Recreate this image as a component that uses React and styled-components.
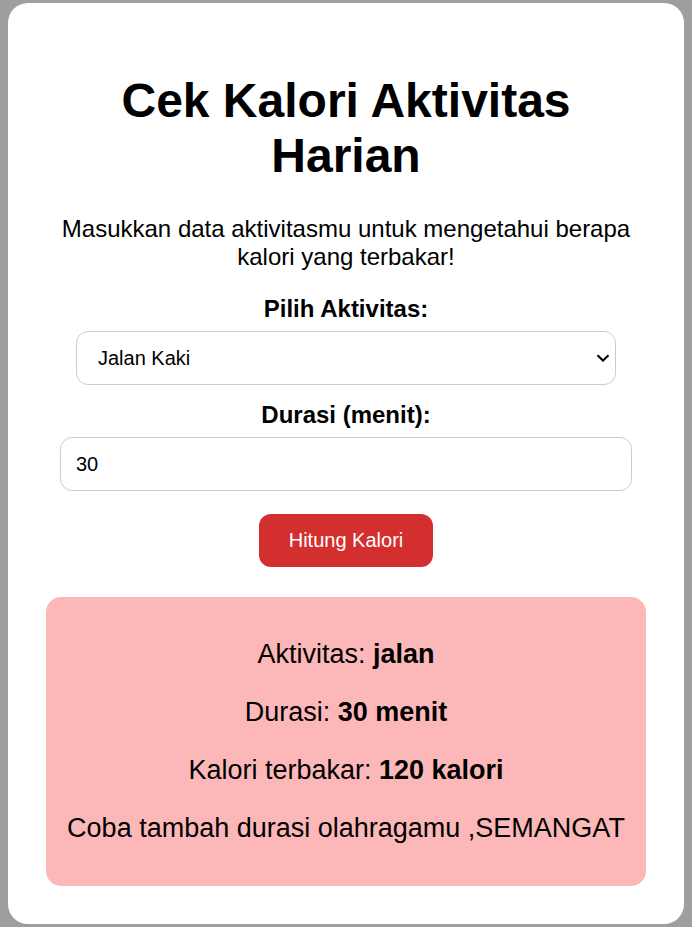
import React, { useState } from "react";
import styled, { createGlobalStyle } from "styled-components";

const GlobalStyle = createGlobalStyle`
    body{
        margin: 3px 8px 4px;
        background: #9e9e9e;
        font-family: "Liberation Sans", Arial, sans-serif;
        color: #000;
    }
`;

const Card = styled.div`
    background: #fff;
    border-radius: 20px;
    padding: 38px;
    text-align: center;
`;

const Title = styled.h1`
    font-size: 48px;
    font-weight: bold;
    margin: 32px 0;
`;

const Intro = styled.p`
    font-size: 24px;
    margin: 24px 0;
`;

const Label = styled.label`
    display: block;
    font-size: 24px;
    font-weight: bold;
    margin: ${({first}) => (first ? "0" : "16px")} 0 8px;
`;

const SelectWrap = styled.div`
    position: relative;
    width: 90%;
    margin: 0 auto;
    svg{
        position: absolute;
        right: 6px;
        top: 50%;
        transform: translateY(-50%);
        pointer-events: none;
    }
`;

const Select = styled.select`
    appearance: none;
    display: block;
    width: 100%;
    height: 54px;
    padding: 0 30px 0 21px;
    font-size: 20px;
    font-family: "Liberation Sans", Arial, sans-serif;
    color: #000;
    background: #fff;
    border: 1px solid #ccc;
    border-radius: 12px;
`;

const Input = styled.input`
    width: 90%;
    height: 22px;
    padding: 15px;
    font-size: 20px;
    font-family: "Liberation Sans", Arial, sans-serif;
    color: #000;
    border: 1px solid #ccc;
    border-radius: 12px;
    outline: none;
`;

const Button = styled.button`
    display: block;
    margin: 23px auto 0;
    padding: 15px 30px;
    font-size: 20px;
    font-family: "Liberation Sans", Arial, sans-serif;
    color: #fff;
    background: #d32f2f;
    border: none;
    border-radius: 12px;
    cursor: pointer;
`;

const Result = styled.div`
    margin-top: 30px;
    padding: 15px;
    background: #fcb8b8;
    border-radius: 15px;
    p{
        font-size: 27px;
        margin: 27px 0;
    }
`;

const rates = { jalan: 4, lari: 10, sepeda: 8, renang: 9 };

const App = () => {
    const [activity, setActivity] = useState("jalan");
    const [duration, setDuration] = useState("30");
    const calories = rates[activity] * Number(duration);

    return (
        <>
            <GlobalStyle />
            <Card>
                <Title>Cek Kalori Aktivitas Harian</Title>
                <Intro>Masukkan data aktivitasmu untuk mengetahui berapa kalori yang terbakar!</Intro>
                <Label first htmlFor="aktivitas">Pilih Aktivitas:</Label>
                <SelectWrap>
                    <Select id="aktivitas" value={activity} onChange={(e) => setActivity(e.target.value)}>
                        <option value="jalan">Jalan Kaki</option>
                        <option value="lari">Lari</option>
                        <option value="sepeda">Bersepeda</option>
                        <option value="renang">Renang</option>
                    </Select>
                    <svg width="14" height="8" viewBox="0 0 14 8" fill="none">
                        <path d="M1.5 1.2 L7 6.5 L12.5 1.2" stroke="#000" strokeWidth="2" />
                    </svg>
                </SelectWrap>
                <Label htmlFor="durasi">Durasi (menit):</Label>
                <Input id="durasi" type="text" value={duration} onChange={(e) => setDuration(e.target.value)} />
                <Button>Hitung Kalori</Button>
                <Result>
                    <p>Aktivitas: <strong>{activity}</strong></p>
                    <p>Durasi: <strong>{duration} menit</strong></p>
                    <p>Kalori terbakar: <strong>{calories} kalori</strong></p>
                    <p>Coba tambah durasi olahragamu ,SEMANGAT</p>
                </Result>
            </Card>
        </>
    );
};

export default App;
